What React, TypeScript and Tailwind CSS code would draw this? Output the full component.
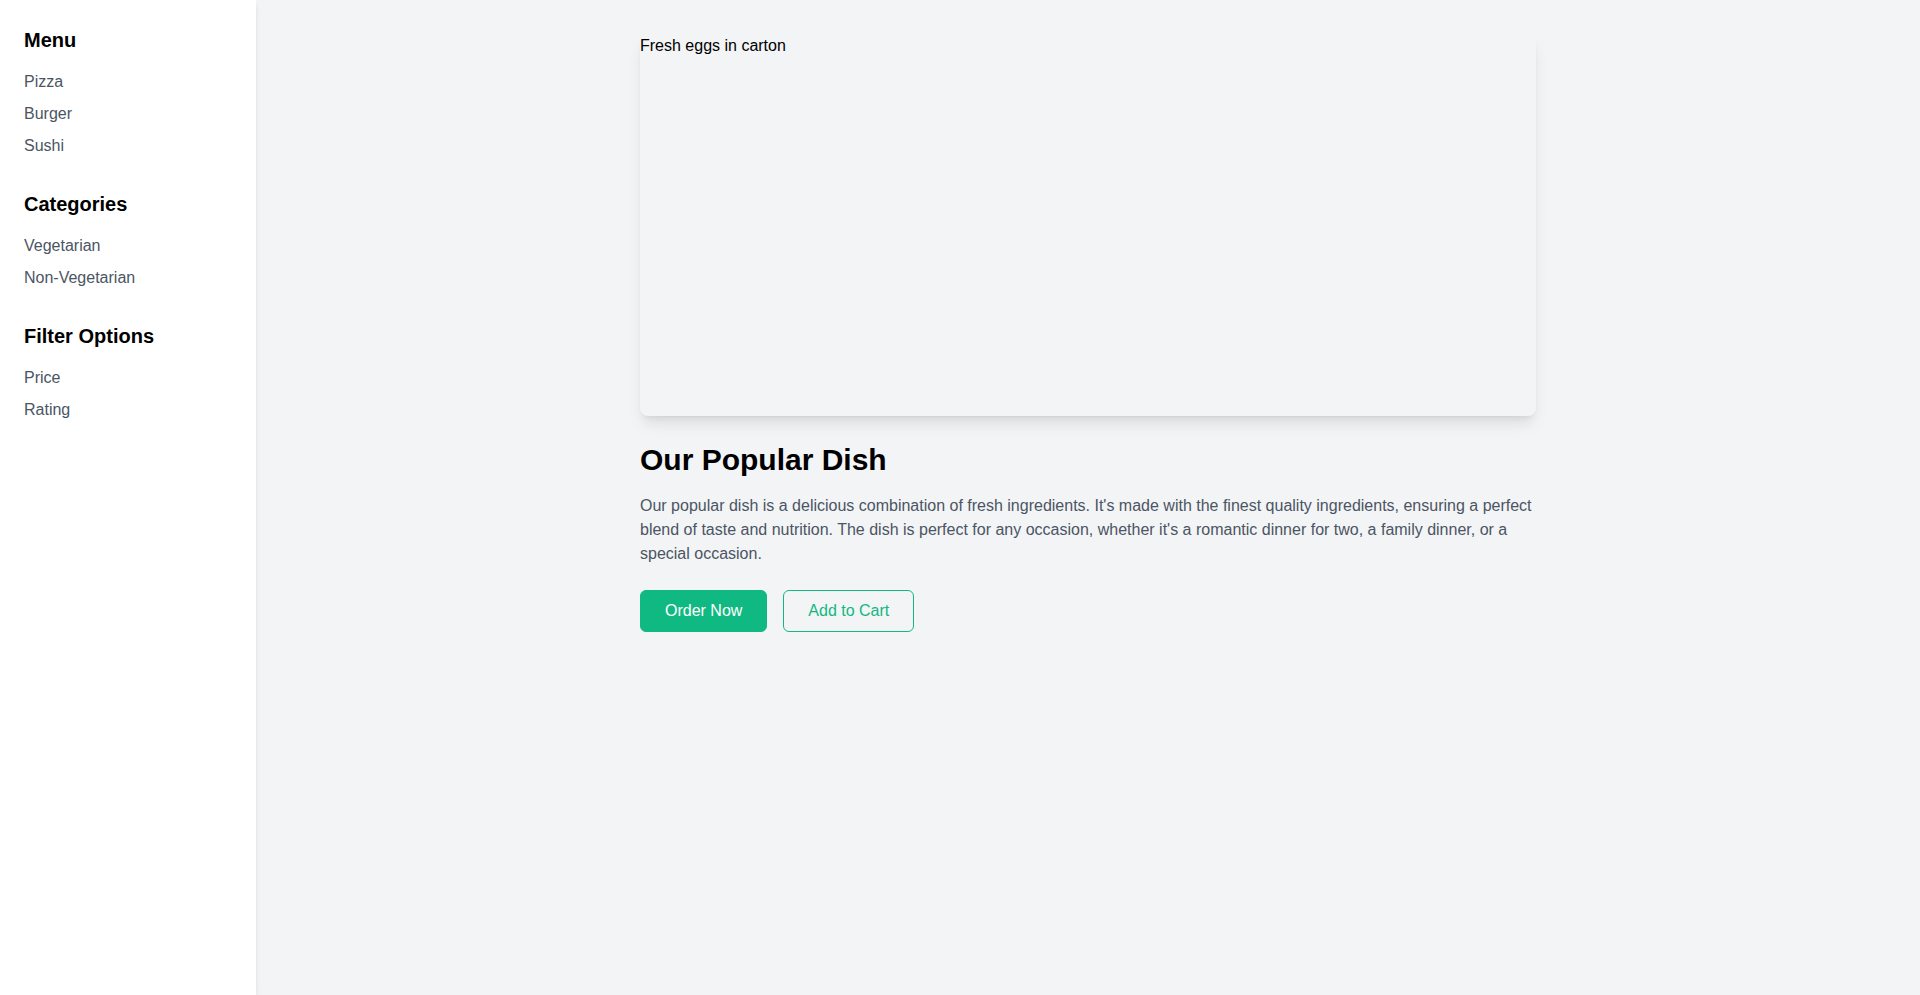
import React from "react";

const sections = [
  { title: "Menu", items: ["Pizza", "Burger", "Sushi"] },
  { title: "Categories", items: ["Vegetarian", "Non-Vegetarian"] },
  { title: "Filter Options", items: ["Price", "Rating"] },
];

export default function App() {
  return (
    <div
      className="flex min-h-screen bg-[#f3f4f6]"
      style={{ fontFamily: '"Liberation Sans", Arial, sans-serif' }}
    >
      <aside className="w-64 shrink-0 bg-white p-6 shadow-md">
        {sections.map((s) => (
          <div key={s.title} className="mb-[30px]">
            <h2 className="mb-4 pt-0.5 text-xl font-bold text-black">{s.title}</h2>
            <ul className="space-y-2">
              {s.items.map((i) => (
                <li key={i} className="text-base text-[#4b5563]">
                  {i}
                </li>
              ))}
            </ul>
          </div>
        ))}
      </aside>
      <main className="flex-1 p-8">
        <div className="mx-auto max-w-4xl">
          <div className="h-96 w-full rounded-lg bg-[#f3f4f6] pt-0.5 text-base text-black shadow-lg">
            Fresh eggs in carton
          </div>
          <h1 className="mt-[26px] mb-4 text-3xl font-bold text-black">Our Popular Dish</h1>
          <p className="mb-6 text-base text-[#4b5563]">
            Our popular dish is a delicious combination of fresh ingredients. It's made with the
            finest quality ingredients, ensuring a perfect blend of taste and nutrition. The dish is
            perfect for any occasion, whether it's a romantic dinner for two, a family dinner, or a
            special occasion.
          </p>
          <div className="flex gap-4">
            <button className="rounded-md border border-[#10b981] bg-[#10b981] px-6 py-2 text-base text-white">
              Order Now
            </button>
            <button className="rounded-md border border-[#10b981] bg-transparent px-6 py-2 text-base text-[#10b981]">
              Add to Cart
            </button>
          </div>
        </div>
      </main>
    </div>
  );
}
